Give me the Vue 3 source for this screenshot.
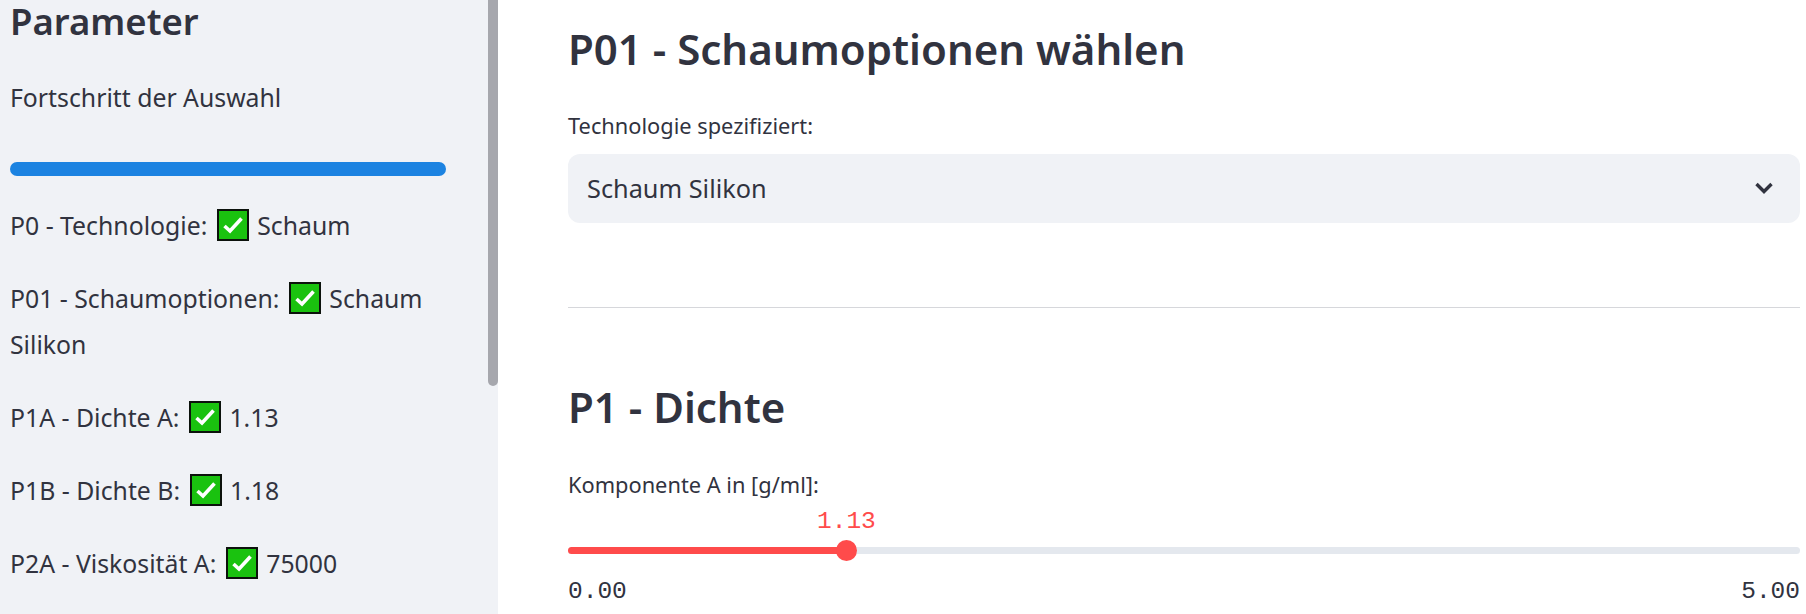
<template>
  <div class="page">
    <aside class="sidebar">
      <h2 class="side-title">Parameter</h2>
      <p class="progress-label">Fortschritt der Auswahl</p>
      <div class="progress"></div>
      <p v-for="row in rows" :key="row.label" class="status">
        {{ row.label }}:
        <svg class="check" viewBox="0 0 32 32" aria-hidden="true">
          <rect x="1" y="1" width="30" height="30" fill="#1ac20f" stroke="#0c120c" stroke-width="2" />
          <path d="M7.5 17l5.5 5L24.5 9.5" fill="none" stroke="#fff" stroke-width="3.6" />
        </svg>
        {{ row.value }}
      </p>
      <div class="scrollbar"></div>
    </aside>

    <main class="content">
      <h1 class="heading">P01 - Schaumoptionen wählen</h1>
      <label class="field-label">Technologie spezifiziert:</label>
      <div class="select">
        <span>Schaum Silikon</span>
        <svg class="chevron" viewBox="0 0 20 14" aria-hidden="true">
          <path d="M2.5 3l7.5 7.5L17.5 3" fill="none" stroke="#31333f" stroke-width="3.4" />
        </svg>
      </div>
      <hr class="divider" />
      <h1 class="heading second">P1 - Dichte</h1>
      <label class="field-label slider-label">Komponente A in [g/ml]:</label>
      <div class="slider">
        <span class="slider-value" :style="{ left: percent + '%' }">{{ value.toFixed(2) }}</span>
        <div class="track">
          <div class="fill" :style="{ width: percent + '%' }"></div>
          <div class="thumb" :style="{ left: percent + '%' }"></div>
        </div>
        <div class="ticks">
          <span>{{ min.toFixed(2) }}</span>
          <span>{{ max.toFixed(2) }}</span>
        </div>
      </div>
    </main>
  </div>
</template>

<script setup>
const rows = [
  { label: "P0 - Technologie", value: "Schaum" },
  { label: "P01 - Schaumoptionen", value: "Schaum Silikon" },
  { label: "P1A - Dichte A", value: "1.13" },
  { label: "P1B - Dichte B", value: "1.18" },
  { label: "P2A - Viskosität A", value: "75000" },
];

const min = 0;
const max = 5;
const value = 1.13;
const percent = ((value - min) / (max - min)) * 100;
</script>

<style>
html,
body {
  margin: 0;
  overflow: hidden;
}
</style>

<style scoped>
.page {
  display: flex;
  width: 1806px;
  height: 614px;
  overflow: hidden;
  font-family: "Noto Sans", "Open Sans", sans-serif;
  font-variant-ligatures: none;
  color: #31333f;
  background: #fff;
}

.sidebar {
  position: relative;
  flex: 0 0 498px;
  box-sizing: border-box;
  padding: 0 52px 0 10px;
  background: #f0f2f6;
  font-size: 24.8px;
}

.side-title {
  margin: 0;
  font-size: 36.5px;
  font-weight: 600;
  line-height: 42px;
}

.progress-label {
  margin: 32px 0 0;
  line-height: 46px;
}

.progress {
  height: 14px;
  margin: 42px 0 0;
  border-radius: 7px;
  background: #1c83e1;
}

.status {
  margin: 27px 0 0;
  line-height: 46px;
}

.progress + .status {
  margin-top: 26px;
}

.check {
  width: 32px;
  height: 32px;
  margin: 0 1.5px 0 3.5px;
  vertical-align: -6px;
}

.scrollbar {
  position: absolute;
  top: 0;
  right: 0;
  width: 10px;
  height: 386px;
  border-radius: 0 0 5px 5px;
  background: #a6a7ad;
}

.content {
  flex: 1;
  min-width: 0;
  padding: 0 6px 0 70px;
}

.heading {
  margin: 20px 0 0;
  font-size: 42px;
  font-weight: 600;
  line-height: 58px;
}

.second {
  margin-top: 70px;
}

.field-label {
  display: block;
  margin-top: 32px;
  font-size: 21.8px;
  line-height: 32px;
}

.select {
  display: flex;
  align-items: center;
  justify-content: space-between;
  box-sizing: border-box;
  height: 69px;
  margin: 12px 0 0;
  padding: 0 26px 2px 19px;
  border-radius: 12px;
  background: #f0f2f6;
  font-size: 25.3px;
}

.chevron {
  width: 20px;
  height: 14px;
}

.divider {
  height: 1px;
  margin: 84px 0 0;
  border: 0;
  background: #d6d7db;
}

.slider-label {
  margin-top: 33px;
}

.slider {
  position: relative;
  padding-top: 46px;
}

.slider-value {
  position: absolute;
  top: 7px;
  transform: translateX(-50%);
  font-family: "Liberation Mono", monospace;
  font-size: 24.5px;
  line-height: 28px;
  color: #ff4b4b;
}

.track {
  position: relative;
  height: 7px;
  border-radius: 4px;
  background: #e4e8ee;
}

.fill {
  height: 100%;
  border-radius: 4px;
  background: #ff4b4b;
}

.thumb {
  position: absolute;
  top: -7px;
  width: 21px;
  height: 21px;
  margin-left: -10px;
  border-radius: 50%;
  background: #ff4b4b;
}

.ticks {
  display: flex;
  justify-content: space-between;
  margin-top: 24px;
  font-family: "Liberation Mono", monospace;
  font-size: 24.5px;
  line-height: 28px;
}
</style>
